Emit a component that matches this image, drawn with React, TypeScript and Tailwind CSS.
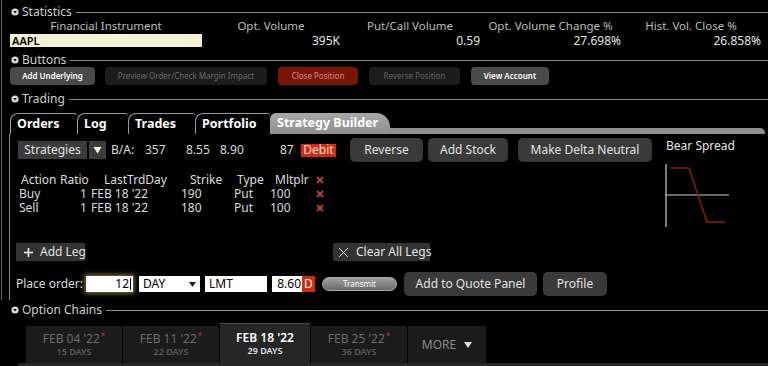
import React from "react";

const stats = [
  { label: "Opt. Volume", value: "395K" },
  { label: "Put/Call Volume", value: "0.59" },
  { label: "Opt. Volume Change %", value: "27.698%" },
  { label: "Hist. Vol. Close %", value: "26.858%" },
];

const topButtons = [
  { label: "Add Underlying", w: "w-[85px] ml-[8px]", tone: "bg-[#4a4a4a] text-white font-semibold" },
  { label: "Preview Order/Check Margin Impact", w: "w-[162px] ml-[10px]", tone: "bg-[#1c1c1c] text-[#6a6a6a]" },
  { label: "Close Position", w: "w-[80px] ml-[11px]", tone: "bg-[#7a1606] text-[#d48a80]" },
  { label: "Reverse Position", w: "w-[91px] ml-[11px]", tone: "bg-[#1c1c1c] text-[#626262]" },
  { label: "View Account", w: "w-[78px] ml-[11px]", tone: "bg-[#4a4a4a] text-white font-semibold" },
];

const tabs = [
  { label: "Orders", w: "w-[67px]" },
  { label: "Log", w: "w-[51px]" },
  { label: "Trades", w: "w-[67px]" },
  { label: "Portfolio", w: "w-[75px]" },
];

const legs = [
  { action: "Buy", strike: "190" },
  { action: "Sell", strike: "180" },
];

const chains = [
  { date: "FEB 04 '22", days: "15 DAYS", star: true },
  { date: "FEB 11 '22", days: "22 DAYS", star: true },
  { date: "FEB 18 '22", days: "29 DAYS", active: true },
  { date: "FEB 25 '22", days: "36 DAYS", star: true },
];

function Bullet() {
  return (
    <svg width="8" height="8" viewBox="0 0 8 8" className="shrink-0">
      <circle cx="4" cy="4" r="3.6" fill="#d8d8d8" />
      <path d="M2.2 3 L5.8 3 L4 5.4 Z" fill="#111" />
    </svg>
  );
}

function SectionHeader({ title, className = "" }: { title: string; className?: string }) {
  return (
    <div className={"flex h-[14px] items-center " + className}>
      <Bullet />
      <span className="ml-[3px] text-[12px] leading-none text-[#cfcfcf]">{title}</span>
      <div className="ml-[4px] h-px flex-1 bg-[#8c8c8c]" />
    </div>
  );
}

function RedX() {
  return (
    <svg width="8" height="8" viewBox="0 0 8 8" className="shrink-0">
      <path d="M1 1 L7 7 M7 1 L1 7" stroke="#b8463b" strokeWidth="1.8" />
    </svg>
  );
}

function DarkButton({ children, className = "" }: { children: React.ReactNode; className?: string }) {
  return (
    <div
      className={
        "flex h-[24px] shrink-0 items-center justify-center rounded-[5px] bg-[#3a3a3a] text-[12px] text-[#e2e2e2] " +
        className
      }
    >
      {children}
    </div>
  );
}

export default function App() {
  return (
    <div className="h-[366px] w-[768px] overflow-hidden whitespace-nowrap bg-black pl-[1px] font-['Noto_Sans','Open_Sans',sans-serif] text-[#dcdcdc]">
      <div className="h-[300px] border-l border-[#6a6a6a] pt-[5px]">
        {/* Statistics */}
        <SectionHeader title="Statistics" className="pl-[9px]" />
        <div className="ml-[8px] grid grid-cols-[192px_138px_140px_141px_140px] text-[11.5px] leading-[14px]">
          <div className="text-center text-[#bdbdbd]">Financial Instrument</div>
          {stats.map((s) => (
            <div key={s.label} className="text-center text-[#bdbdbd]">
              {s.label}
            </div>
          ))}
          <div className="mt-[1px] flex h-[13px] items-center bg-[#f4f1d4] pl-[2px] text-[11px] font-semibold text-black">
            AAPL
          </div>
          {stats.map((s) => (
            <div key={s.value} className="mt-[1px] h-[13px] text-right text-[12px] leading-[13px] text-[#e6e6e6]">
              {s.value}
            </div>
          ))}
        </div>

        {/* Buttons */}
        <SectionHeader title="Buttons" className="mt-[6px] pl-[9px]" />
        <div className="flex h-[18px]">
          {topButtons.map((b) => (
            <div
              key={b.label}
              className={
                "flex h-[18px] shrink-0 items-center justify-center rounded-[4px] text-[8px] leading-none " +
                b.w +
                " " +
                b.tone
              }
            >
              {b.label}
            </div>
          ))}
        </div>

        {/* Trading */}
        <SectionHeader title="Trading" className="mt-[7px] pl-[9px]" />
        <div className="ml-[8px] mt-[7px] flex h-[21px] items-end">
          {tabs.map((t) => (
            <div
              key={t.label}
              className={
                "flex h-[21px] shrink-0 items-center rounded-tl-[8px] rounded-tr-[3px] border-l border-t border-[#9a9a9a] pl-[6px] text-[12.5px] font-bold text-white " +
                t.w
              }
            >
              {t.label}
            </div>
          ))}
          <div className="flex h-[21px] w-[120px] shrink-0 items-center rounded-tl-[6px] rounded-tr-[14px] bg-gradient-to-b from-[#a8a8a8] to-[#8e8e8e] pl-[7px] text-[12.5px] font-bold text-white">
            Strategy Builder
          </div>
          <div className="mr-[3px] h-[6px] flex-1 rounded-tr-[5px] bg-[#8e8e8e]" />
        </div>

        <div className="ml-[7px] flex h-[166px] border-l border-[#8a8a8a]">
          <div className="w-[650px] shrink-0">
            {/* Strategies row */}
            <div className="mt-[4px] flex h-[24px] items-center text-[12px]">
              <div className="ml-[8px] flex h-[18px] w-[69px] shrink-0 items-center justify-center bg-[#3c3c3c] text-[#e0e0e0]">
                Strategies
              </div>
              <div className="ml-[2px] flex h-[18px] w-[17px] shrink-0 items-center justify-center bg-[#3c3c3c]">
                <svg width="9" height="8" viewBox="0 0 9 8">
                  <path d="M0.5 1 L8.5 1 L4.5 7.5 Z" fill="#fff" />
                </svg>
              </div>
              <span className="ml-[5px] w-[34px] shrink-0">B/A:</span>
              <span className="w-[41px] shrink-0">357</span>
              <span className="w-[34px] shrink-0">8.55</span>
              <span className="w-[60px] shrink-0">8.90</span>
              <span className="w-[21px] shrink-0">87</span>
              <span className="flex h-[13px] w-[35px] shrink-0 items-center justify-center bg-[#d62a0f] text-[#f4e0dc]">
                Debit
              </span>
              <DarkButton className="ml-[14px] w-[73px]">Reverse</DarkButton>
              <DarkButton className="ml-[5px] w-[80px]">Add Stock</DarkButton>
              <DarkButton className="ml-[10px] w-[134px]">Make Delta Neutral</DarkButton>
            </div>

            {/* Legs table */}
            <div className="mt-[11px] text-[12px] leading-[14px]">
              <div className="flex h-[14px] items-center pl-[11px]">
                <span className="w-[39px] shrink-0">Action</span>
                <span className="w-[44px] shrink-0">Ratio</span>
                <span className="w-[86px] shrink-0">LastTrdDay</span>
                <span className="w-[47px] shrink-0">Strike</span>
                <span className="w-[38px] shrink-0">Type</span>
                <span className="w-[41px] shrink-0">Mltplr</span>
                <RedX />
              </div>
              {legs.map((l) => (
                <div key={l.action} className="flex h-[14px] items-center pl-[9px]">
                  <span className="w-[61px] shrink-0">{l.action}</span>
                  <span className="w-[11px] shrink-0">1</span>
                  <span className="w-[90px] shrink-0">FEB 18 '22</span>
                  <span className="w-[53px] shrink-0">{l.strike}</span>
                  <span className="w-[36px] shrink-0">Put</span>
                  <span className="w-[46px] shrink-0">100</span>
                  <RedX />
                </div>
              ))}
            </div>

            {/* Add / clear legs */}
            <div className="mt-[28px] flex h-[18px] text-[12px]">
              <div className="ml-[6px] flex h-[18px] w-[69px] shrink-0 items-center bg-[#333] pl-[8px] text-[#e4e4e4]">
                <svg width="9" height="9" viewBox="0 0 9 9" className="shrink-0">
                  <path d="M4.5 0 V9 M0 4.5 H9" stroke="#f0f0f0" strokeWidth="1.6" />
                </svg>
                <span className="ml-[7px]">Add Leg</span>
              </div>
              <div className="ml-[248px] flex h-[18px] w-[97px] shrink-0 items-center bg-[#333] pl-[5px] text-[#e4e4e4]">
                <svg width="11" height="11" viewBox="0 0 11 11" className="shrink-0">
                  <path d="M1 1 L10 10 M10 1 L1 10" stroke="#d8d8d8" strokeWidth="1" />
                </svg>
                <span className="ml-[7px]">Clear All Legs</span>
              </div>
            </div>

            {/* Place order */}
            <div className="mt-[11px] flex h-[24px] items-center text-[12px]">
              <span className="ml-[6px] w-[70px] shrink-0 text-[#d8d8d8]">Place order:</span>
              <div className="flex h-[16px] w-[47px] shrink-0 items-center justify-end bg-white pr-[2px] leading-none text-black shadow-[0_0_4px_2px_rgba(190,170,90,0.55)]">
                12<span className="ml-[1px] h-[12px] w-px bg-black" />
              </div>
              <div className="ml-[6px] flex h-[16px] w-[61px] shrink-0 items-center justify-between bg-white px-[4px] leading-none text-black">
                DAY
                <svg width="7" height="5" viewBox="0 0 7 5">
                  <path d="M0 0 H7 L3.5 5 Z" fill="#222" />
                </svg>
              </div>
              <div className="ml-[5px] flex h-[16px] w-[62px] shrink-0 items-center bg-white pl-[4px] leading-none text-black">
                LMT
              </div>
              <div className="ml-[5px] flex h-[16px] w-[30px] shrink-0 items-center justify-end bg-white pr-[1px] leading-none text-black">
                8.60
              </div>
              <div className="flex h-[16px] w-[13px] shrink-0 items-center justify-center bg-[#d62a0f] leading-none text-white">
                D
              </div>
              <div className="ml-[7px] flex h-[14px] w-[75px] shrink-0 items-center justify-center rounded-full border border-[#aaa] bg-gradient-to-b from-[#a0a0a0] to-[#6a6a6a] text-[8px] leading-none text-white">
                Transmit
              </div>
              <DarkButton className="ml-[7px] w-[133px]">Add to Quote Panel</DarkButton>
              <DarkButton className="ml-[6px] w-[64px]">Profile</DarkButton>
            </div>
          </div>

          {/* Bear spread chart */}
          <div className="flex-1">
            <div className="ml-[6px] mt-[6px] text-[12px] leading-[12px] text-[#e4e4e4]">Bear Spread</div>
            <svg width="80" height="70" viewBox="0 0 80 70" className="mt-[10px]">
              <path d="M6 2 V65 M6 33 H69" stroke="#cfcfcf" strokeWidth="1.2" fill="none" />
              <path d="M10 6 H29 L47 60 H65" stroke="#8e1b0c" strokeWidth="1.5" fill="none" />
            </svg>
          </div>
        </div>
      </div>

      {/* Option chains */}
      <SectionHeader title="Option Chains" className="mt-[3px] pl-[10px]" />
      <div className="ml-[17px] mt-[6px] flex h-[43px] items-end border-b-[3px] border-[#262626] pl-[8px]">
        {chains.map((c) => (
          <div
            key={c.date}
            className={
              "mr-px flex shrink-0 flex-col items-center justify-center " +
              (c.active
                ? "h-[40px] w-[90px] border-t border-[#4a4a4a] bg-[#262626]"
                : "h-[37px] w-[96px] bg-[#1b1b1b]")
            }
          >
            <div
              className={
                "flex text-[12px] leading-[14px] " + (c.active ? "font-semibold text-white" : "text-[#6c6c6c]")
              }
            >
              {c.date}
              {c.star && <span className="ml-[1px] text-[8px] leading-[8px] text-[#b8322a]">*</span>}
            </div>
            <div
              className={
                "text-[9px] font-semibold leading-[11px] " + (c.active ? "text-[#e4e4e4]" : "text-[#5c5c5c]")
              }
            >
              {c.days}
            </div>
          </div>
        ))}
        <div className="flex h-[37px] w-[78px] shrink-0 items-center justify-center bg-[#1b1b1b] text-[12px] text-[#8a8a8a]">
          MORE
          <svg width="8" height="6" viewBox="0 0 8 6" className="ml-[8px]">
            <path d="M0 0 H8 L4 6 Z" fill="#e0e0e0" />
          </svg>
        </div>
      </div>
    </div>
  );
}
